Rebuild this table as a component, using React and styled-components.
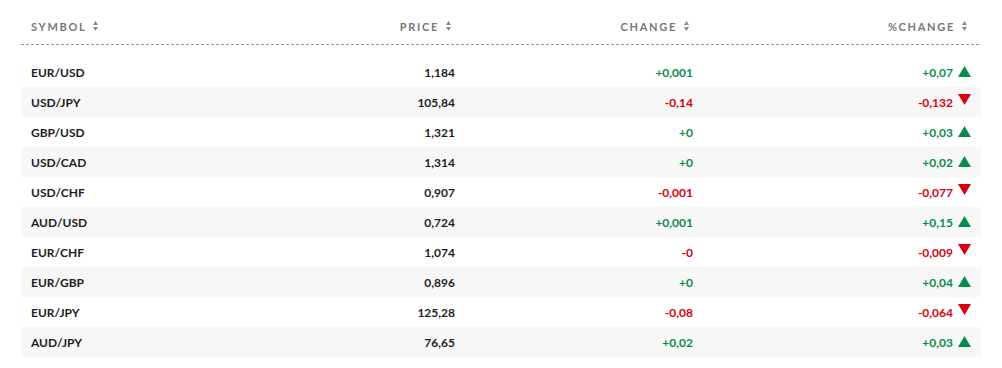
import React from 'react'
import styled, {createGlobalStyle} from 'styled-components'

const GlobalStyle = createGlobalStyle`
  html, body {
    margin: 0;
    padding: 0;
    background: #fff;
  }
  body {
    font-family: Lato, "Open Sans", Arial, sans-serif;
  }
`

const rates = [
  {symbol: 'EUR/USD', price: '1,184', change: '+0,001', pct: '+0,07', up: true},
  {symbol: 'USD/JPY', price: '105,84', change: '-0,14', pct: '-0,132', up: false},
  {symbol: 'GBP/USD', price: '1,321', change: '+0', pct: '+0,03', up: true},
  {symbol: 'USD/CAD', price: '1,314', change: '+0', pct: '+0,02', up: true},
  {symbol: 'USD/CHF', price: '0,907', change: '-0,001', pct: '-0,077', up: false},
  {symbol: 'AUD/USD', price: '0,724', change: '+0,001', pct: '+0,15', up: true},
  {symbol: 'EUR/CHF', price: '1,074', change: '-0', pct: '-0,009', up: false},
  {symbol: 'EUR/GBP', price: '0,896', change: '+0', pct: '+0,04', up: true},
  {symbol: 'EUR/JPY', price: '125,28', change: '-0,08', pct: '-0,064', up: false},
  {symbol: 'AUD/JPY', price: '76,65', change: '+0,02', pct: '+0,03', up: true},
]

const COLS = '200px 244px 238px 278px'

const Table = styled.div`
  width: 960px;
  margin: 0 21px;
`

const HeadRow = styled.div`
  display: grid;
  grid-template-columns: ${COLS};
  height: 37px;
  padding-top: 8px;
  align-items: center;
  background-image: repeating-linear-gradient(to right, #9a9a9a 0 3px, transparent 3px 5px);
  background-size: 100% 1px;
  background-repeat: no-repeat;
  background-position: left bottom;
  margin-bottom: 12px;
`

const HeadCell = styled.div`
  display: flex;
  align-items: center;
  justify-content: ${p => (p.$left ? 'flex-start' : 'flex-end')};
  padding: ${p => (p.$left ? '0 0 0 10px' : '0 14px 0 0')};
  padding-bottom: 1px;
  font-size: 11px;
  font-weight: 700;
  letter-spacing: 1.7px;
  color: #777;
`

const Sort = styled.svg`
  margin-left: 7px;
  width: 5px;
  height: 10px;
`

const Row = styled.div`
  display: grid;
  grid-template-columns: ${COLS};
  height: 30px;
  align-items: center;
  background: ${p => (p.$odd ? '#f7f7f7' : 'transparent')};
  font-size: 12px;
  font-weight: 700;
`

const Cell = styled.div`
  display: flex;
  align-items: center;
  justify-content: ${p => (p.$left ? 'flex-start' : 'flex-end')};
  padding: ${p => (p.$left ? '0 0 0 10px' : '0 10px 0 0')};
  color: ${p => (p.$tone === 'up' ? '#0b8a4f' : p.$tone === 'down' ? '#d9000d' : '#1e1e1e')};
`

const Arrow = styled.svg`
  margin-left: 5px;
  width: 13px;
  height: 11px;
  position: relative;
  top: ${p => (p.$up ? '-1px' : '-3px')};
`

const SortIcon = () => (
  <Sort viewBox="0 0 5 10">
    <polygon points="2.5,0 5,4 0,4" fill="#888" />
    <polygon points="0,6 5,6 2.5,10" fill="#888" />
  </Sort>
)

const Trend = ({up}) => (
  <Arrow viewBox="0 0 13 11" $up={up}>
    {up ? (
      <polygon points="6.5,0 13,11 0,11" fill="#0b8a4f" />
    ) : (
      <polygon points="0,0 13,0 6.5,11" fill="#d9000d" />
    )}
  </Arrow>
)

export default function App() {
  return (
    <>
      <GlobalStyle />
      <Table>
        <HeadRow>
          <HeadCell $left>
            SYMBOL
            <SortIcon />
          </HeadCell>
          <HeadCell>
            PRICE
            <SortIcon />
          </HeadCell>
          <HeadCell>
            CHANGE
            <SortIcon />
          </HeadCell>
          <HeadCell>
            %CHANGE
            <SortIcon />
          </HeadCell>
        </HeadRow>
        {rates.map((r, i) => (
          <Row key={r.symbol} $odd={i % 2 === 1}>
            <Cell $left>{r.symbol}</Cell>
            <Cell>{r.price}</Cell>
            <Cell $tone={r.up ? 'up' : 'down'}>{r.change}</Cell>
            <Cell $tone={r.up ? 'up' : 'down'}>
              {r.pct}
              <Trend up={r.up} />
            </Cell>
          </Row>
        ))}
      </Table>
    </>
  )
}
